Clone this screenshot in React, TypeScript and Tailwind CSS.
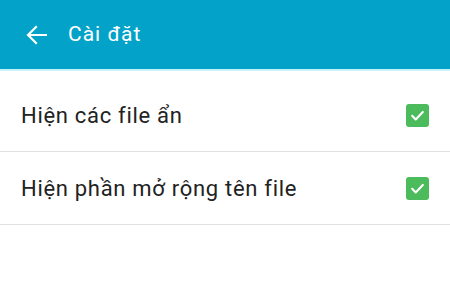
import React from "react";

function Check() {
  return (
    <div className="w-[23px] h-[23px] rounded-[3px] bg-[#4cbb5c] flex items-center justify-center">
      <svg width="17" height="17" viewBox="0 0 24 24" fill="none">
        <path d="M4.5 12.5l5 5L19.5 7" stroke="white" strokeWidth="3" strokeLinecap="round" strokeLinejoin="round" />
      </svg>
    </div>
  );
}

export default function App() {
  return (
    <div className="w-[450px] h-[305px] bg-white overflow-hidden" style={{ fontFamily: "Roboto, 'Noto Sans', sans-serif" }}>
      <div className="h-[69px] bg-[#03a3c9] flex items-center">
        <svg className="ml-[26px]" width="21" height="20" viewBox="0 0 21 20" fill="none">
          <path d="M20 10H2.5M10 2L2 10l8 8" stroke="white" strokeWidth="2.2" strokeLinecap="square" />
        </svg>
        <span className="ml-[21px] text-white text-[21px] tracking-[1px] leading-none">Cài đặt</span>
      </div>
      <div className="h-[2px] bg-[#c9f1fb]" />
      <div className="h-[81px] pt-[8px] flex items-center justify-between pl-[21px] pr-[21px] border-b border-[#e2e2e2]">
        <span className="text-[22px] tracking-[0.7px] text-[#222]">Hiện các file ẩn</span>
        <Check />
      </div>
      <div className="h-[73px] flex items-center justify-between pl-[21px] pr-[21px] border-b border-[#e2e2e2]">
        <span className="text-[22px] tracking-[0.7px] text-[#222]">Hiện phần mở rộng tên file</span>
        <Check />
      </div>
    </div>
  );
}
